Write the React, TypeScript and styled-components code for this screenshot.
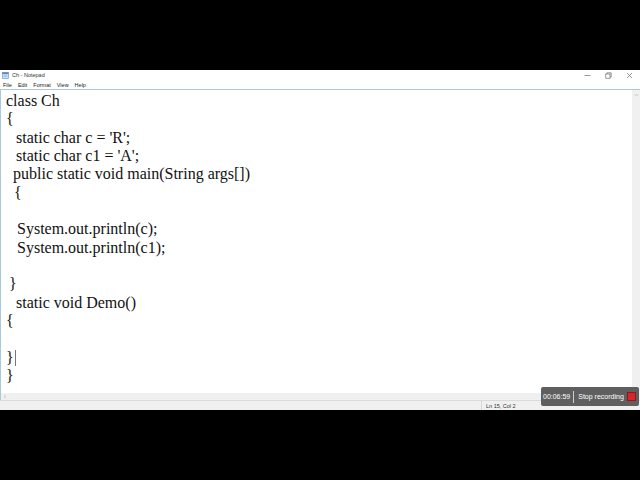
import styled, { createGlobalStyle } from "styled-components";

const GlobalStyle = createGlobalStyle`
  html, body {
    margin: 0;
    padding: 0;
    background: #000;
  }
  #root {
    width: 640px;
    height: 480px;
  }
`;

const Screen = styled.div`
  width: 640px;
  height: 480px;
  display: flex;
  flex-direction: column;
  background: #000;
  position: relative;
  overflow: hidden;
`;

const Letterbox = styled.div`
  height: 70px;
  flex: none;
  background: #000;
`;

const Window = styled.div`
  height: 340px;
  flex: none;
  display: flex;
  flex-direction: column;
  background: #fff;
  font-family: "Liberation Sans", Arial, sans-serif;
`;

const TitleBar = styled.div`
  height: 10px;
  display: flex;
  align-items: center;
  padding-left: 2px;
  gap: 3px;
  font-size: 5.5px;
  color: #333;
`;

const TitleText = styled.span`
  flex: 1;
  line-height: 10px;
`;

const Controls = styled.div`
  display: flex;
  align-items: center;
  height: 10px;
`;

const ControlButton = styled.div`
  width: 21px;
  height: 10px;
  display: flex;
  align-items: center;
  justify-content: center;
`;

const MenuBar = styled.div`
  height: 9px;
  display: flex;
  align-items: center;
  gap: 6px;
  padding-left: 3px;
  font-size: 5.5px;
  color: #222;
  border-bottom: 1px solid #a9cbd9;
`;

const EditorArea = styled.div`
  flex: 1;
  display: flex;
  flex-direction: column;
  border-left: 1px solid #a9cbd9;
  min-height: 0;
`;

const EditorRow = styled.div`
  flex: 1;
  display: flex;
  min-height: 0;
`;

const TextArea = styled.div`
  flex: 1;
  padding: 2px 0 0 5px;
  font-family: "Liberation Serif", "Times New Roman", serif;
  font-size: 16px;
  line-height: 18.33px;
  color: #111;
  overflow: hidden;
`;

const Line = styled.div<{ $indent: number }>`
  height: 18.33px;
  white-space: pre;
  padding-left: ${(p) => p.$indent}px;
`;

const Caret = styled.span`
  display: inline-block;
  width: 1px;
  height: 16px;
  background: #777;
  vertical-align: -3px;
  margin-left: 1px;
`;

const VScroll = styled.div`
  width: 8px;
  background: #f0f0f0;
  display: flex;
  justify-content: center;
  padding-top: 3px;
`;

const HScroll = styled.div`
  height: 7px;
  background: #f0f0f0;
  display: flex;
  align-items: center;
  padding-left: 2px;
`;

const StatusBar = styled.div`
  height: 10px;
  background: #f0f0f0;
  border-top: 1px solid #dadada;
  display: flex;
  align-items: center;
  font-size: 5.5px;
  color: #333;
  box-sizing: border-box;
`;

const StatusSpacer = styled.div`
  width: 481px;
  height: 100%;
  border-right: 1px solid #d6d6d6;
`;

const StatusCell = styled.div`
  padding-left: 4px;
`;

const Recorder = styled.div`
  position: absolute;
  left: 541px;
  top: 387px;
  width: 98px;
  height: 19px;
  background: #5f5f5f;
  border-radius: 2px;
  display: flex;
  align-items: center;
  font-family: "Liberation Sans", Arial, sans-serif;
  font-size: 7px;
  color: #fff;
  white-space: nowrap;
  box-sizing: border-box;
  padding: 0 3px 0 2px;
`;

const Timer = styled.span`
  padding-right: 3px;
  border-right: 1px solid #cfcfcf;
  line-height: 12px;
`;

const StopLabel = styled.span`
  flex: 1;
  padding-left: 4px;
`;

const StopSquare = styled.div`
  width: 9px;
  height: 9px;
  background: #d4262b;
  border: 1px solid #8c1a1a;
  box-sizing: border-box;
`;

const code: { text: string; indent: number; caret?: boolean }[] = [
  { text: "class Ch", indent: 0 },
  { text: "{", indent: 0 },
  { text: "static char c = 'R';", indent: 10 },
  { text: "static char c1 = 'A';", indent: 10 },
  { text: "public static void main(String args[])", indent: 7 },
  { text: "{", indent: 8 },
  { text: "", indent: 0 },
  { text: "System.out.println(c);", indent: 11 },
  { text: "System.out.println(c1);", indent: 11 },
  { text: "", indent: 0 },
  { text: "}", indent: 3 },
  { text: "static void Demo()", indent: 10 },
  { text: "{", indent: 0 },
  { text: "", indent: 0 },
  { text: "}", indent: 0, caret: true },
  { text: "}", indent: 0 },
];

const NotepadIcon = () => (
  <svg width="7" height="7" viewBox="0 0 7 7">
    <rect x="0.5" y="0.5" width="6" height="6" fill="#cfe3f3" stroke="#5a8fc0" strokeWidth="0.6" />
    <rect x="0.5" y="0.5" width="6" height="1.4" fill="#3f7fbf" />
    <line x1="1.5" y1="3" x2="5.5" y2="3" stroke="#6a8fb0" strokeWidth="0.4" />
    <line x1="1.5" y1="4.4" x2="5.5" y2="4.4" stroke="#6a8fb0" strokeWidth="0.4" />
  </svg>
);

export default function App() {
  return (
    <>
      <GlobalStyle />
      <Screen>
        <Letterbox />
        <Window>
          <TitleBar>
            <NotepadIcon />
            <TitleText>Ch - Notepad</TitleText>
            <Controls>
              <ControlButton>
                <svg width="7" height="7" viewBox="0 0 7 7">
                  <line x1="0.5" y1="3.5" x2="6.5" y2="3.5" stroke="#555" strokeWidth="0.6" />
                </svg>
              </ControlButton>
              <ControlButton>
                <svg width="7" height="7" viewBox="0 0 7 7">
                  <rect x="0.8" y="2" width="4.2" height="4.2" fill="none" stroke="#555" strokeWidth="0.6" />
                  <polyline points="2,2 2,0.8 6.2,0.8 6.2,5 5,5" fill="none" stroke="#555" strokeWidth="0.6" />
                </svg>
              </ControlButton>
              <ControlButton>
                <svg width="7" height="7" viewBox="0 0 7 7">
                  <line x1="1" y1="1" x2="6" y2="6" stroke="#555" strokeWidth="0.6" />
                  <line x1="6" y1="1" x2="1" y2="6" stroke="#555" strokeWidth="0.6" />
                </svg>
              </ControlButton>
            </Controls>
          </TitleBar>
          <MenuBar>
            <span>File</span>
            <span>Edit</span>
            <span>Format</span>
            <span>View</span>
            <span>Help</span>
          </MenuBar>
          <EditorArea>
            <EditorRow>
              <TextArea>
                {code.map((line, i) => (
                  <Line key={i} $indent={line.indent}>
                    {line.text}
                    {line.caret && <Caret />}
                  </Line>
                ))}
              </TextArea>
              <VScroll>
                <svg width="5" height="4" viewBox="0 0 5 4">
                  <polyline points="0.8,3 2.5,1.2 4.2,3" fill="none" stroke="#b5b5b5" strokeWidth="0.7" />
                </svg>
              </VScroll>
            </EditorRow>
            <HScroll>
              <svg width="4" height="5" viewBox="0 0 4 5">
                <polyline points="3,0.8 1.2,2.5 3,4.2" fill="none" stroke="#b5b5b5" strokeWidth="0.7" />
              </svg>
            </HScroll>
          </EditorArea>
          <StatusBar>
            <StatusSpacer />
            <StatusCell>Ln 15, Col 2</StatusCell>
          </StatusBar>
        </Window>
        <Letterbox />
        <Recorder>
          <Timer>00:06:59</Timer>
          <StopLabel>Stop recording</StopLabel>
          <StopSquare />
        </Recorder>
      </Screen>
    </>
  );
}
